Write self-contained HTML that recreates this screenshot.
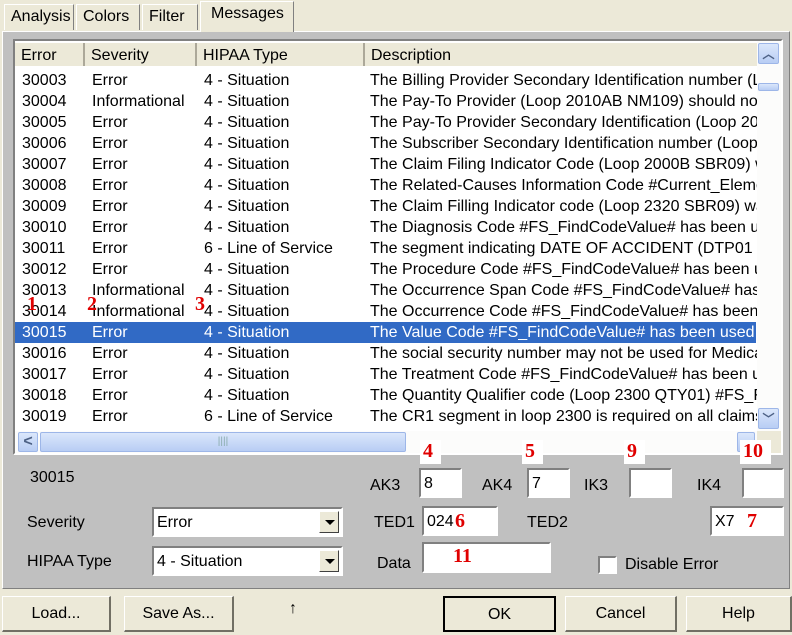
<!DOCTYPE html>
<html><head><meta charset="utf-8"><style>
*{box-sizing:border-box;margin:0;padding:0}
body{width:792px;height:635px;background:#ece9d8;font-family:"Liberation Sans",Arial,sans-serif;font-size:16px;color:#000;position:relative;overflow:hidden}
.a{position:absolute}
.tab{position:absolute;top:4px;height:26px;border:1px solid #fff;border-right-color:#808080;border-bottom:none;background:#ece9d8;padding:3px 6px 0;font-size:16px}
.panel{position:absolute;left:2px;top:31px;width:788px;height:558px;background:#c0c0c0;border:1px solid #fff;border-right-color:#808080;border-bottom-color:#808080}
.list{position:absolute;left:13px;top:39px;width:770px;height:416px;background:#fff;border:2px solid #808080;border-right-color:#fff;border-bottom-color:#fff;overflow:hidden}
.hdr{position:absolute;top:2px;height:23px;background:#ece9d8;border-right:2px solid #aca899;padding:4px 6px 0;white-space:nowrap}
.row{position:absolute;left:0;width:741px;height:21px;white-space:nowrap}
.row span{position:absolute;top:2px}
.sel{background:#316ac5;color:#fff}
.inp{position:absolute;background:#fff;border:2px solid #808080;border-right-color:#fff;border-bottom-color:#fff;padding:5px 3px 0}
.red{position:absolute;color:#e00000;font-family:"Liberation Serif",serif;font-weight:bold;font-size:20px;background:#fff;padding:0 8px 0 3px;height:24px}
.btn{position:absolute;top:596px;height:36px;background:#ece9d8;border:1px solid #fff;border-right:2px solid #716f64;border-bottom:2px solid #716f64;text-align:center;padding-top:8px}
.sb{background:linear-gradient(#dbe7fb,#b8cdf4);border:1px solid #9db6e8;border-radius:2px}
.dd{position:absolute;right:2px;top:2px;width:20px;height:22px;background:#ece9d8;border:1px solid #fff;border-right-color:#404040;border-bottom-color:#404040}
.dd:after{content:"";position:absolute;left:5px;top:8px;border-left:5px solid transparent;border-right:5px solid transparent;border-top:5px solid #000}
</style></head><body>
<div class="panel"></div>
<div class="tab" style="left:4px;width:70px">Analysis</div>
<div class="tab" style="left:76px;width:64px">Colors</div>
<div class="tab" style="left:142px;width:56px">Filter</div>
<div class="tab" style="left:200px;top:1px;height:31px;width:94px;padding-left:10px;background:#ece9d8;z-index:2">Messages</div>
<div class="list">
<div class="hdr" style="left:0;width:70px">Error</div>
<div class="hdr" style="left:70px;width:112px">Severity</div>
<div class="hdr" style="left:182px;width:168px">HIPAA Type</div>
<div class="hdr" style="left:350px;width:400px;border-right:none">Description</div>
<div id="rows"></div>
<div class="a" style="left:742px;top:0;width:24px;height:392px;background:#fcfcfb"></div>
<div class="a sb" style="left:743px;top:2px;width:21px;height:21px;text-align:center;font-size:12px;color:#4d6185;font-weight:bold;line-height:20px">︿</div>
<div class="a sb" style="left:743px;top:42px;width:21px;height:8px"></div>
<div class="a sb" style="left:743px;top:367px;width:21px;height:21px;text-align:center;font-size:12px;color:#4d6185;font-weight:bold;line-height:20px">﹀</div>
<div class="a" style="left:0;top:390px;width:742px;height:22px;background:#fcfcfb"></div>
<div class="a sb" style="left:3px;top:391px;width:20px;height:20px;color:#4d6185;font-weight:bold;text-align:center;line-height:18px">&lt;</div>
<div class="a sb" style="left:25px;top:391px;width:366px;height:20px;text-align:center;font-size:10px;color:#8aa;line-height:18px">||||</div>
<div class="a sb" style="left:722px;top:391px;width:18px;height:20px"></div>
<div class="a" style="left:742px;top:390px;width:26px;height:24px;background:#ece9d8"></div>
</div>
<div class="a" style="left:30px;top:469px">30015</div>
<div class="a" style="left:370px;top:477px">AK3</div>
<div class="inp" style="left:419px;top:468px;width:43px;height:30px">8</div>
<div class="a" style="left:482px;top:477px">AK4</div>
<div class="inp" style="left:527px;top:468px;width:43px;height:30px">7</div>
<div class="a" style="left:584px;top:477px">IK3</div>
<div class="inp" style="left:629px;top:468px;width:43px;height:30px"></div>
<div class="a" style="left:697px;top:477px">IK4</div>
<div class="inp" style="left:742px;top:468px;width:42px;height:30px"></div>
<div class="red" style="left:420px;top:440px">4</div>
<div class="red" style="left:522px;top:440px">5</div>
<div class="red" style="left:624px;top:440px">9</div>
<div class="red" style="left:740px;top:440px">10</div>
<div class="a" style="left:27px;top:514px">Severity</div>
<div class="inp" style="left:152px;top:507px;width:191px;height:30px">Error<div class="dd"></div></div>
<div class="a" style="left:27px;top:553px">HIPAA Type</div>
<div class="inp" style="left:152px;top:546px;width:191px;height:30px">4 - Situation<div class="dd"></div></div>
<div class="a" style="left:374px;top:514px">TED1</div>
<div class="inp" style="left:422px;top:506px;width:76px;height:30px">024</div>
<div class="red" style="left:452px;top:510px;background:none">6</div>
<div class="a" style="left:527px;top:514px">TED2</div>
<div class="inp" style="left:710px;top:506px;width:74px;height:30px">X7</div>
<div class="red" style="left:744px;top:510px;background:none">7</div>
<div class="a" style="left:377px;top:555px">Data</div>
<div class="inp" style="left:422px;top:542px;width:129px;height:31px"></div>
<div class="red" style="left:450px;top:545px;background:none">11</div>
<div class="inp" style="left:598px;top:556px;width:19px;height:18px"></div>
<div class="a" style="left:625px;top:556px">Disable Error</div>
<div class="red" style="left:24px;top:293px;background:none">1</div>
<div class="red" style="left:84px;top:293px;background:none">2</div>
<div class="red" style="left:192px;top:293px;background:none">3</div>
<div class="btn" style="left:2px;width:109px">Load...</div>
<div class="btn" style="left:124px;width:110px">Save As...</div>
<div class="a" style="left:289px;top:600px;font-size:16px">↑</div>
<div class="btn" style="left:443px;width:113px;border:2px solid #000">OK</div>
<div class="btn" style="left:565px;width:112px">Cancel</div>
<div class="btn" style="left:686px;width:106px">Help</div>
<script>
var d=[["30003","Error","4 - Situation","The Billing Provider Secondary Identification number (Loop"],
["30004","Informational","4 - Situation","The Pay-To Provider (Loop 2010AB NM109) should not"],
["30005","Error","4 - Situation","The Pay-To Provider Secondary Identification (Loop 2010"],
["30006","Error","4 - Situation","The Subscriber Secondary Identification number (Loop 20"],
["30007","Error","4 - Situation","The Claim Filing Indicator Code (Loop 2000B SBR09) was"],
["30008","Error","4 - Situation","The Related-Causes Information Code #Current_Element"],
["30009","Error","4 - Situation","The Claim Filling Indicator code (Loop 2320 SBR09) was"],
["30010","Error","4 - Situation","The Diagnosis Code #FS_FindCodeValue# has been used"],
["30011","Error","6 - Line of Service","The segment indicating DATE OF ACCIDENT (DTP01"],
["30012","Error","4 - Situation","The Procedure Code #FS_FindCodeValue# has been used"],
["30013","Informational","4 - Situation","The Occurrence Span Code #FS_FindCodeValue# has been"],
["30014","Informational","4 - Situation","The Occurrence Code #FS_FindCodeValue# has been used"],
["30015","Error","4 - Situation","The Value Code #FS_FindCodeValue# has been used"],
["30016","Error","4 - Situation","The social security number may not be used for Medicare"],
["30017","Error","4 - Situation","The Treatment Code #FS_FindCodeValue# has been used"],
["30018","Error","4 - Situation","The Quantity Qualifier code (Loop 2300 QTY01) #FS_Find"],
["30019","Error","6 - Line of Service","The CR1 segment in loop 2300 is required on all claims"]];
var h="";d.forEach(function(r,i){h+='<div class="row'+(i==12?' sel':'')+'" style="top:'+(29+i*21)+'px"><span style="left:7px">'+r[0]+'</span><span style="left:77px">'+r[1]+'</span><span style="left:189px">'+r[2]+'</span><span style="left:355px">'+r[3]+'</span></div>'});
document.getElementById("rows").innerHTML=h;
</script>
</body></html>
